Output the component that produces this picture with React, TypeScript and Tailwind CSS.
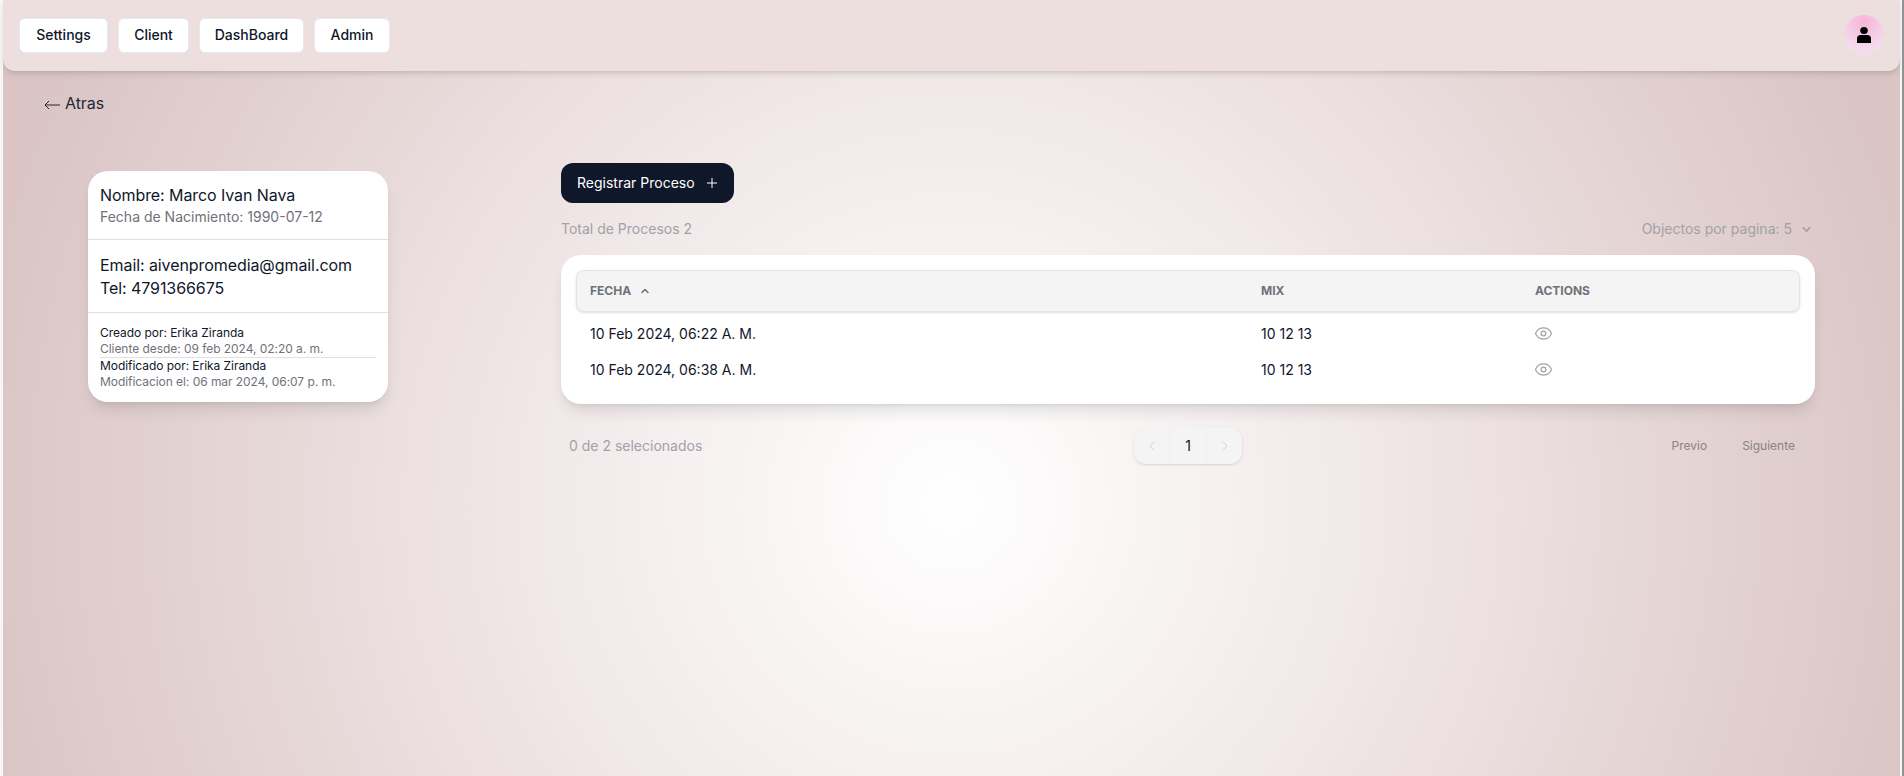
import { ChevronDown, ChevronLeft, ChevronRight, ChevronUp, Eye, Plus } from "lucide-react";

function NavButton({ label, width }: { label: string; width: string }) {
  return (
    <button className={`h-[35px] ${width} rounded-md bg-white border border-[#e5eaf2] text-sm font-medium text-[#0f172a]`}>
      {label}
    </button>
  );
}

function Row({ date }: { date: string }) {
  return (
    <tr className="h-9 text-sm text-[#0f172a]">
      <td className="pl-[14px]">{date}</td>
      <td className="pl-[14px]">10 12 13</td>
      <td className="pl-[14px]">
        <Eye className="w-[19px] h-[19px] -ml-[1px] -mt-[1px] text-[#a1a1aa]" strokeWidth={1.5} />
      </td>
    </tr>
  );
}

export default function App() {
  return (
    <div
      className="w-[1904px] h-[776px] overflow-hidden bg-[#f6f6f6] pl-[3px] pr-[2px] border-r-2 border-[#929292] text-[#0f172a]"
      style={{ fontFamily: "Inter, 'Liberation Sans', sans-serif" }}
    >
      <div className="h-full flex flex-col bg-[radial-gradient(circle_at_50%_65%,_#ffffff_0px,_#f2e9e9_400px,_#dac4c4_1000px)]">
        <nav className="h-[71px] shrink-0 flex items-center justify-between pl-4 pr-4 bg-[#ecdfde] rounded-b-xl shadow-md">
          <div className="flex gap-[10px] -mt-[1px]">
            <NavButton label="Settings" width="w-[89px]" />
            <NavButton label="Client" width="w-[71px]" />
            <NavButton label="DashBoard" width="w-[105px]" />
            <NavButton label="Admin" width="w-[76px]" />
          </div>
          <div className="w-10 h-10 rounded-full bg-[radial-gradient(circle_at_50%_15%,_#f8b4d9_0%,_#f3dcec_70%)] flex items-center justify-center -mt-[1px]">
            <svg viewBox="0 0 14 16" className="w-[14px] h-4" fill="black">
              <ellipse cx="7" cy="3.500" rx="3.800" ry="3.500" />
              <path d="M0 16v-4.500C0 9.500 1.500 8 3.500 8h7c2 0 3.500 1.500 3.500 3.500V16z" />
            </svg>
          </div>
        </nav>
        <div className="pl-[41px] pt-[20px] h-[26px] box-content">
          <a className="flex items-center gap-[5px] text-base leading-6 text-[#1e293b] tracking-[-0.08px]">
            <svg viewBox="0 0 16 10" className="w-4 h-[10px] mt-[3px]" fill="none" stroke="#1e293b" strokeWidth="1">
              <path d="M16 5H1M5 1 1 5l4 4" />
            </svg>
            Atras
          </a>
        </div>
        <div className="flex items-start mt-[46px] pl-[85px]">
          <aside className="w-[300px] mt-[8px] bg-white rounded-[20px] shadow-lg shrink-0">
            <div className="px-3 pt-[12px] pb-[12px] border-b border-[#e0e0e0]">
              <p className="text-base leading-6 text-[#0f172a] tracking-[-0.08px]">Nombre: Marco Ivan Nava</p>
              <p className="text-sm leading-5 text-[#71717a]">Fecha de Nacimiento: 1990-07-12</p>
            </div>
            <div className="px-3 pt-[14px] pb-[12px] border-b border-[#e0e0e0] tracking-[-0.08px]">
              <p className="text-base leading-[23px]">Email: aivenpromedia@gmail.com</p>
              <p className="text-base leading-[23px]">Tel: 4791366675</p>
            </div>
            <div className="px-3 pt-[12px] pb-[12px] text-xs leading-4 tracking-[-0.05px]">
              <p>Creado por: Erika Ziranda</p>
              <p className="text-[#71717a] border-b border-[#e0e0e0]">Cliente desde: 09 feb 2024, 02:20 a. m.</p>
              <p>Modificado por: Erika Ziranda</p>
              <p className="text-[#71717a]">Modificacion el: 06 mar 2024, 06:07 p. m.</p>
            </div>
          </aside>
          <section className="ml-[173px] w-[1254px]">
            <button className="h-10 w-[173px] rounded-xl bg-[#0f172a] text-white text-sm flex items-center pl-4 gap-[9px]">
              Registrar Proceso
              <Plus className="w-4 h-4" strokeWidth={1.5} />
            </button>
            <div className="flex justify-between items-center mt-[14px] h-6 text-sm text-[#a1a1aa]">
              <span>Total de Procesos 2</span>
              <span className="flex items-center gap-[8px] pr-[2px]">
                Objectos por pagina: 5
                <ChevronDown className="w-[13px] h-[13px]" strokeWidth={3} />
              </span>
            </div>
            <div className="mt-[14px] h-[149px] bg-white rounded-[20px] shadow-lg p-[15px]">
              <table className="w-full border-separate border-spacing-0 table-fixed">
                <thead>
                  <tr className="h-[42px] text-xs font-semibold text-[#71717a] bg-[#f4f4f5] shadow-sm rounded-lg">
                    <th className="w-[671px] pl-[13px] text-left rounded-l-lg border border-r-0 border-[#e4e4e7]">
                      <span className="flex items-center gap-2">
                        FECHA
                        <ChevronUp className="w-3 h-3" strokeWidth={3} />
                      </span>
                    </th>
                    <th className="w-[274px] pl-[14px] text-left border-y border-[#e4e4e7]">MIX</th>
                    <th className="pl-[14px] text-left rounded-r-lg border border-l-0 border-[#e4e4e7]">ACTIONS</th>
                  </tr>
                </thead>
                <tbody>
                  <tr className="h-1" />
                  <Row date="10 Feb 2024, 06:22 A. M." />
                  <Row date="10 Feb 2024, 06:38 A. M." />
                </tbody>
              </table>
            </div>
            <div className="relative flex items-center justify-between mt-[24px] h-9 pl-2 pr-5">
              <span className="text-sm text-[#a1a1aa]">0 de 2 selecionados</span>
              <div className="absolute left-[573px] top-0 h-9 flex items-center rounded-xl bg-[#f4f4f5] shadow-sm text-sm">
                <span className="w-9 h-9 flex items-center justify-center border-r border-[#eeeeef]"><ChevronLeft className="w-4 h-4 text-[#d4d4d8]" strokeWidth={1.5} /></span>
                <span className="w-9 text-center text-[#0f172a]">1</span>
                <span className="w-9 h-9 flex items-center justify-center border-l border-[#eeeeef]"><ChevronRight className="w-4 h-4 text-[#d4d4d8]" strokeWidth={1.5} /></span>
              </div>
              <div className="flex gap-[35px] text-xs text-[#8b8385]">
                <span>Previo</span>
                <span>Siguiente</span>
              </div>
            </div>
          </section>
        </div>
      </div>
    </div>
  );
}
